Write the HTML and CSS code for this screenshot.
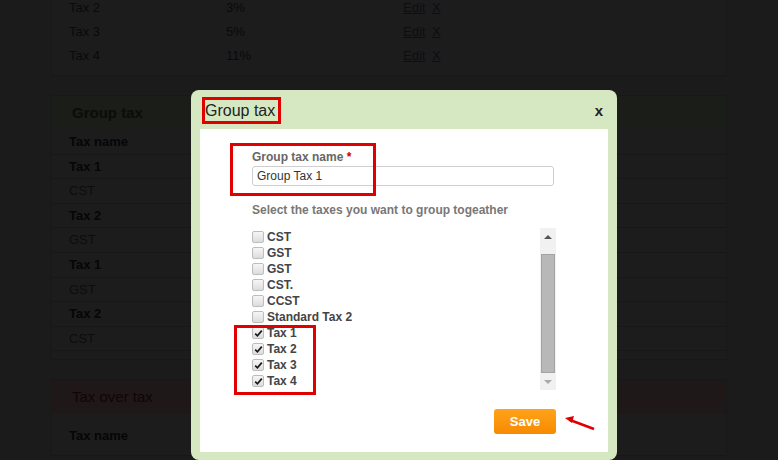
FILE: index.html
```html
<!DOCTYPE html>
<html lang="en">
<head>
    <meta charset="UTF-8">
    <title>Group tax</title>
    <link rel="stylesheet" href="styles.css">
</head>
<body>
    <!-- page behind the dialog, dimmed -->
    <div class="page">
        <div class="card card-top">
            <div class="trow"><span class="c-name">Tax 2</span><span class="c-rate">3%</span><a class="c-edit" href="#">Edit</a><a class="c-del" href="#">X</a></div>
            <div class="trow"><span class="c-name">Tax 3</span><span class="c-rate">5%</span><a class="c-edit" href="#">Edit</a><a class="c-del" href="#">X</a></div>
            <div class="trow"><span class="c-name">Tax 4</span><span class="c-rate">11%</span><a class="c-edit" href="#">Edit</a><a class="c-del" href="#">X</a></div>
        </div>

        <div class="card">
            <div class="card-head head-green">Group tax</div>
            <div class="grow bold">Tax name</div>
            <div class="grow bold">Tax 1</div>
            <div class="grow">CST</div>
            <div class="grow bold">Tax 2</div>
            <div class="grow">GST</div>
            <div class="grow bold">Tax 1</div>
            <div class="grow">GST</div>
            <div class="grow bold">Tax 2</div>
            <div class="grow">CST</div>
        </div>

        <div class="card card-last">
            <div class="card-head head-red">Tax over tax</div>
            <div class="grow bold tall">Tax name</div>
        </div>
    </div>

    <div class="modal">
        <div class="modal-head">
            <span class="modal-title">Group tax</span>
            <span class="modal-close">x</span>
        </div>
        <div class="modal-body">
            <div class="mark mark-name"></div>
            <div class="mark mark-taxes"></div>

            <div class="form">
                <label class="field-label">Group tax name <span class="req">*</span></label>
                <input class="field-input" type="text" value="Group Tax 1">

                <div class="hint">Select the taxes you want to group togeather</div>

                <div class="picker">
                    <div class="tax-list">
                        <div class="tax-item"><span class="box"></span>CST</div>
                        <div class="tax-item"><span class="box"></span>GST</div>
                        <div class="tax-item"><span class="box"></span>GST</div>
                        <div class="tax-item"><span class="box"></span>CST.</div>
                        <div class="tax-item"><span class="box"></span>CCST</div>
                        <div class="tax-item"><span class="box"></span>Standard Tax 2</div>
                        <div class="tax-item"><span class="box"><svg width="9" height="9" viewBox="0 0 9 9"><path d="M1.2 4.6 L3.4 6.8 L7.8 1.6" fill="none" stroke="#1a1a1a" stroke-width="1.7"/></svg></span>Tax 1</div>
                        <div class="tax-item"><span class="box"><svg width="9" height="9" viewBox="0 0 9 9"><path d="M1.2 4.6 L3.4 6.8 L7.8 1.6" fill="none" stroke="#1a1a1a" stroke-width="1.7"/></svg></span>Tax 2</div>
                        <div class="tax-item"><span class="box"><svg width="9" height="9" viewBox="0 0 9 9"><path d="M1.2 4.6 L3.4 6.8 L7.8 1.6" fill="none" stroke="#1a1a1a" stroke-width="1.7"/></svg></span>Tax 3</div>
                        <div class="tax-item"><span class="box"><svg width="9" height="9" viewBox="0 0 9 9"><path d="M1.2 4.6 L3.4 6.8 L7.8 1.6" fill="none" stroke="#1a1a1a" stroke-width="1.7"/></svg></span>Tax 4</div>
                    </div>
                    <div class="scrollbar">
                        <div class="sb-btn"><span class="arrow-up"></span></div>
                        <div class="sb-thumb"></div>
                        <div class="sb-btn"><span class="arrow-down"></span></div>
                    </div>
                </div>

                <div class="actions">
                    <button class="save-btn">Save</button>
                </div>
            </div>
        </div>
    </div>

    <svg class="pointer" width="40" height="24" viewBox="0 0 40 24">
        <path d="M34 18 L10 9" stroke="#e00000" stroke-width="2.5" fill="none"/>
        <path d="M5 7 L14 5 L12 12 Z" fill="#e00000"/>
    </svg>
</body>
</html>
```

FILE: styles.css
```css
html, body {
    height: 460px;
    overflow: hidden;
}
body {
    margin: 0;
    font-family: "Liberation Sans", Arial, sans-serif;
    background-color: #1b1b1b;
    color: #0a0a0a;
}

/* page behind the dialog (already dimmed colours) */
.page {
    padding: 0 51px;
}
.card {
    background: #1c1c1c;
    border: 1px solid #181818;
    margin-bottom: 19px;
    padding-bottom: 8px;
}
.card-top {
    margin-top: -5px;
    border-top: none;
}
.card-last {
    margin-bottom: 0;
    padding-bottom: 0;
    border-bottom: none;
}
.trow {
    display: flex;
    height: 24px;
    align-items: center;
    font-size: 13px;
    padding-left: 17px;
}
.c-name {
    width: 157px;
}
.c-rate {
    width: 177px;
}
.c-edit {
    width: 29px;
    color: #0b0e17;
}
.c-del {
    color: #0b0e17;
}
.card-head {
    height: 34px;
    line-height: 34px;
    padding-left: 20px;
    font-size: 15px;
}
.head-green {
    background: #1a1d18;
    font-weight: bold;
    color: #0a0d08;
}
.head-red {
    background: #1e1819;
    color: #120505;
}
.grow {
    height: 23.6px;
    line-height: 23.6px;
    border-bottom: 1px solid #171717;
    font-size: 13px;
    padding-left: 17px;
    color: #0d0d0d;
}
.grow.bold {
    font-weight: bold;
    color: #060606;
}
.grow.tall {
    height: 41px;
    line-height: 43px;
}

/* dialog */
.modal {
    position: absolute;
    left: 191px;
    top: 90px;
    width: 426px;
    height: 370px;
    box-sizing: border-box;
    background: #d5e8c2;
    border-radius: 8px;
    padding: 0 9px 8px 9px;
    display: flex;
    flex-direction: column;
}
.modal-head {
    height: 39px;
    display: flex;
    justify-content: space-between;
    align-items: flex-start;
    padding: 7px 5px 0 2px;
    box-sizing: border-box;
}
.modal-title {
    border: 3px solid #e00000;
    font-size: 16px;
    line-height: 21px;
    padding-right: 3px;
    color: #222;
}
.modal-close {
    font-size: 15px;
    font-weight: bold;
    line-height: 20px;
    margin-top: 4px;
    color: #222;
}
.modal-body {
    flex: 1;
    background: white;
    position: relative;
    padding: 21px 52px 0 52px;
}
.mark {
    position: absolute;
    border: 3px solid #e00000;
    box-sizing: border-box;
}
.mark-name {
    left: 30px;
    top: 14px;
    width: 146px;
    height: 53px;
}
.mark-taxes {
    left: 34px;
    top: 196px;
    width: 82px;
    height: 70px;
}

.form {
    width: 304px;
    display: flex;
    flex-direction: column;
}
.field-label {
    font-size: 12px;
    font-weight: bold;
    color: #666;
    line-height: 15px;
}
.req {
    color: #c00;
}
.field-input {
    margin-top: 1px;
    width: 302px;
    height: 20px;
    box-sizing: border-box;
    border: 1px solid #cfcfcf;
    border-radius: 3px;
    padding: 0 4px;
    font-family: "Liberation Sans", Arial, sans-serif;
    font-size: 12px;
    color: #333;
}
.hint {
    margin-top: 17px;
    font-size: 12px;
    font-weight: bold;
    color: #777;
    line-height: 15px;
}
.picker {
    margin-top: 10px;
    height: 162px;
    display: flex;
}
.tax-list {
    flex: 1;
    padding-top: 1px;
}
.tax-item {
    height: 16px;
    display: flex;
    align-items: center;
    font-size: 12px;
    font-weight: bold;
    color: #444;
}
.box {
    width: 10px;
    height: 10px;
    border: 1px solid #bdbdbd;
    border-radius: 2px;
    background: linear-gradient(#f6f6f6, #dcdcdc);
    margin-right: 3px;
    display: flex;
    align-items: center;
    justify-content: center;
}
.scrollbar {
    width: 16px;
    background: #f1f1f1;
    display: flex;
    flex-direction: column;
}
.sb-btn {
    height: 17px;
    display: flex;
    align-items: center;
    justify-content: center;
}
.arrow-up {
    border: 4px solid transparent;
    border-bottom: 4px solid #555;
    border-top: none;
}
.arrow-down {
    border: 4px solid transparent;
    border-top: 4px solid #aaa;
    border-bottom: none;
}
.sb-thumb {
    margin: 9px 1px 0 1px;
    flex: 1;
    background: #b8b8b8;
    border: 1px solid #a3a3a3;
}
.actions {
    display: flex;
    justify-content: flex-end;
    margin-top: 19px;
}
.save-btn {
    width: 62px;
    height: 25px;
    border: none;
    border-radius: 3px;
    background: linear-gradient(#ffa31a, #f78a00);
    color: white;
    font-family: "Liberation Sans", Arial, sans-serif;
    font-size: 13px;
    font-weight: bold;
    cursor: pointer;
}

.pointer {
    position: absolute;
    left: 560px;
    top: 411px;
}
```
